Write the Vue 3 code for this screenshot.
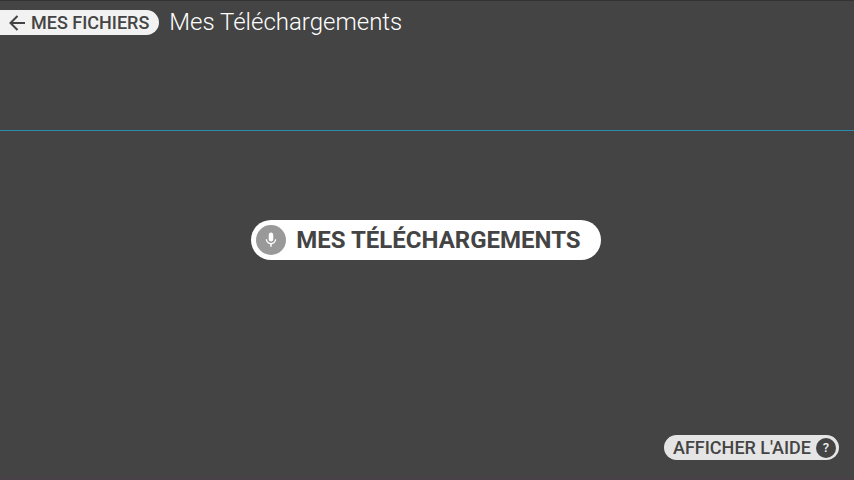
<script setup>
const backLabel = 'MES FICHIERS'
const title = 'Mes Téléchargements'
</script>

<template>
  <div class="screen">
    <header>
      <div class="top">
        <button class="back" type="button">
          <svg class="arrow" viewBox="0 0 20 20" aria-hidden="true">
            <path d="M18 10H4M10.500 3L3.500 10L10.500 17" />
          </svg>
          <span>{{ backLabel }}</span>
        </button>
        <h1>{{ title }}</h1>
      </div>
    </header>
    <main>
      <button class="voice" type="button">
        <span class="mic">
          <svg viewBox="0 0 24 24" aria-hidden="true">
            <path d="M12 14c1.66 0 3-1.34 3-3V5c0-1.66-1.34-3-3-3S9 3.34 9 5v6c0 1.66 1.34 3 3 3zm5.3-3c0 3-2.54 5.1-5.3 5.1S6.7 14 6.7 11H5c0 3.41 2.72 6.23 6 6.72V21h2v-3.28c3.28-.48 6-3.3 6-6.72h-1.700z" />
          </svg>
        </span>
        <span>MES TÉLÉCHARGEMENTS</span>
      </button>
    </main>
    <footer>
      <button class="help" type="button">
        <span>AFFICHER L'AIDE</span>
        <span class="mark">?</span>
      </button>
    </footer>
  </div>
</template>

<style>
body {
  background: #444;
}
</style>

<style scoped>
.screen {
  display: grid;
  grid-template-rows: 1fr auto 1fr;
  min-height: 100vh;
  background: #444;
  box-shadow: inset 0 1px #333, inset 0 -3px #484246;
  font-family: Roboto, sans-serif;
}
button {
  display: flex;
  align-items: center;
  border: 0;
  margin: 0;
  color: #444;
  font-family: inherit;
  white-space: nowrap;
}
.top {
  display: flex;
  align-items: flex-start;
  gap: 10px;
  height: 120px;
  padding-top: 10px;
  border-bottom: 1px solid #2b8aae;
}
.back {
  gap: 4px;
  height: 25px;
  padding: 0 10px 0 7px;
  border-radius: 0 13px 13px 0;
  background: #f2f2f2;
  font-size: 18px;
  font-weight: 500;
}
.arrow {
  width: 20px;
  height: 20px;
  fill: none;
  stroke: #444;
  stroke-width: 2;
}
h1 {
  margin: 0;
  color: #fff;
  font-size: 24px;
  font-weight: 300;
  line-height: 24px;
}
main {
  display: flex;
  align-items: center;
  justify-content: center;
  padding-right: 2px;
}
.voice {
  gap: 10px;
  height: 40px;
  padding: 0 20px 0 5px;
  border-radius: 20px;
  background: #fff;
  font-size: 24px;
  font-weight: 700;
}
.mic {
  display: flex;
  align-items: center;
  justify-content: center;
  width: 30px;
  height: 30px;
  border-radius: 50%;
  background: #999;
}
.mic svg {
  width: 18px;
  height: 18px;
  fill: #fff;
}
footer {
  display: flex;
  align-items: flex-end;
  justify-content: flex-end;
  padding: 0 15px 20px;
}
.help {
  gap: 5px;
  height: 25px;
  padding: 0 3px 0 9px;
  border-radius: 13px;
  background: #e5e5e5;
  font-size: 18px;
  font-weight: 500;
}
.mark {
  width: 20px;
  height: 20px;
  border-radius: 50%;
  background: #444;
  color: #eee;
  font-size: 13px;
  line-height: 20px;
}
</style>
